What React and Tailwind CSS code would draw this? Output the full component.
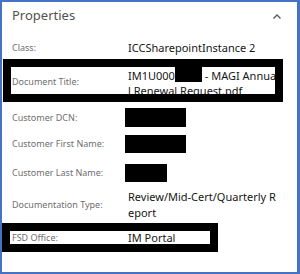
import React from "react";

const font = { fontFamily: '"Noto Sans", "Open Sans", sans-serif' };

function Label({ children, className = "" }) {
  return (
    <div className={`w-[116px] shrink-0 text-[9px] leading-[12px] text-[#6f6f6f] ${className}`}>
      {children}
    </div>
  );
}

function Redact({ w, h }) {
  return <div className="bg-black ml-[-3px]" style={{ width: w, height: h }} />;
}

export default function App() {
  return (
    <div
      className="w-[300px] h-[274px] bg-white border-l-2 border-t-2 border-r-[3px] border-b-2 border-[#4472c4] overflow-hidden"
      style={font}
    >
      <div className="h-[28px] flex items-center justify-between pl-[10px] pr-[16px]">
        <span className="text-[13px] text-[#525252]">Properties</span>
        <svg width="8" height="5" viewBox="0 0 8 5" fill="none">
          <polyline points="0.5,4.5 4,1 7.5,4.5" stroke="#5a5a5a" strokeWidth="1.4" />
        </svg>
      </div>

      <div className="flex flex-col pl-[10px]">
        {/* Class */}
        <div className="mt-[10px] h-[16px] flex items-center">
          <Label>Class:</Label>
          <div className="text-[11px] text-[#161616] whitespace-nowrap">ICCSharepointInstance 2</div>
        </div>

        {/* Document Title (outlined) */}
        <div className="mt-[11px] ml-[-1px] pl-[1px] w-[264px] h-[27px] flex outline-8 outline-black">
          <Label className="self-center pt-[3px]">Document Title:</Label>
          <div className="pt-[1px] text-[11px] leading-[15px] text-[#161616] whitespace-nowrap">
            <div className="flex items-start">
              <span>IM1U000</span>
              <span className="inline-block bg-black w-[27px] h-[15px] mt-[-1px]" />
              <span>&nbsp;- MAGI Annua</span>
            </div>
            <div>l Renewal Request.pdf</div>
          </div>
        </div>

        {/* Customer DCN */}
        <div className="mt-[14px] h-[19px] flex items-center">
          <Label>Customer DCN:</Label>
          <Redact w={61} h={19} />
        </div>

        {/* Customer First Name */}
        <div className="mt-[8px] h-[18px] flex items-center">
          <Label>Customer First Name:</Label>
          <Redact w={61} h={18} />
        </div>

        {/* Customer Last Name */}
        <div className="mt-[11px] h-[18px] flex items-center">
          <Label>Customer Last Name:</Label>
          <Redact w={42} h={18} />
        </div>

        {/* Documentation Type */}
        <div className="mt-[7px] h-[32px] flex items-center">
          <Label>Documentation Type:</Label>
          <div className="text-[11px] leading-[16px] text-[#161616] whitespace-nowrap">
            <div>Review/Mid-Cert/Quarterly R</div>
            <div>eport</div>
          </div>
        </div>

        {/* FSD Office (outlined) */}
        <div className="mt-[10px] ml-[-2px] pl-[2px] w-[200px] h-[13px] flex items-center outline-8 outline-black">
          <Label>FSD Office:</Label>
          <div className="text-[11px] leading-[13px] text-[#161616] whitespace-nowrap">IM Portal</div>
        </div>
      </div>
    </div>
  );
}
